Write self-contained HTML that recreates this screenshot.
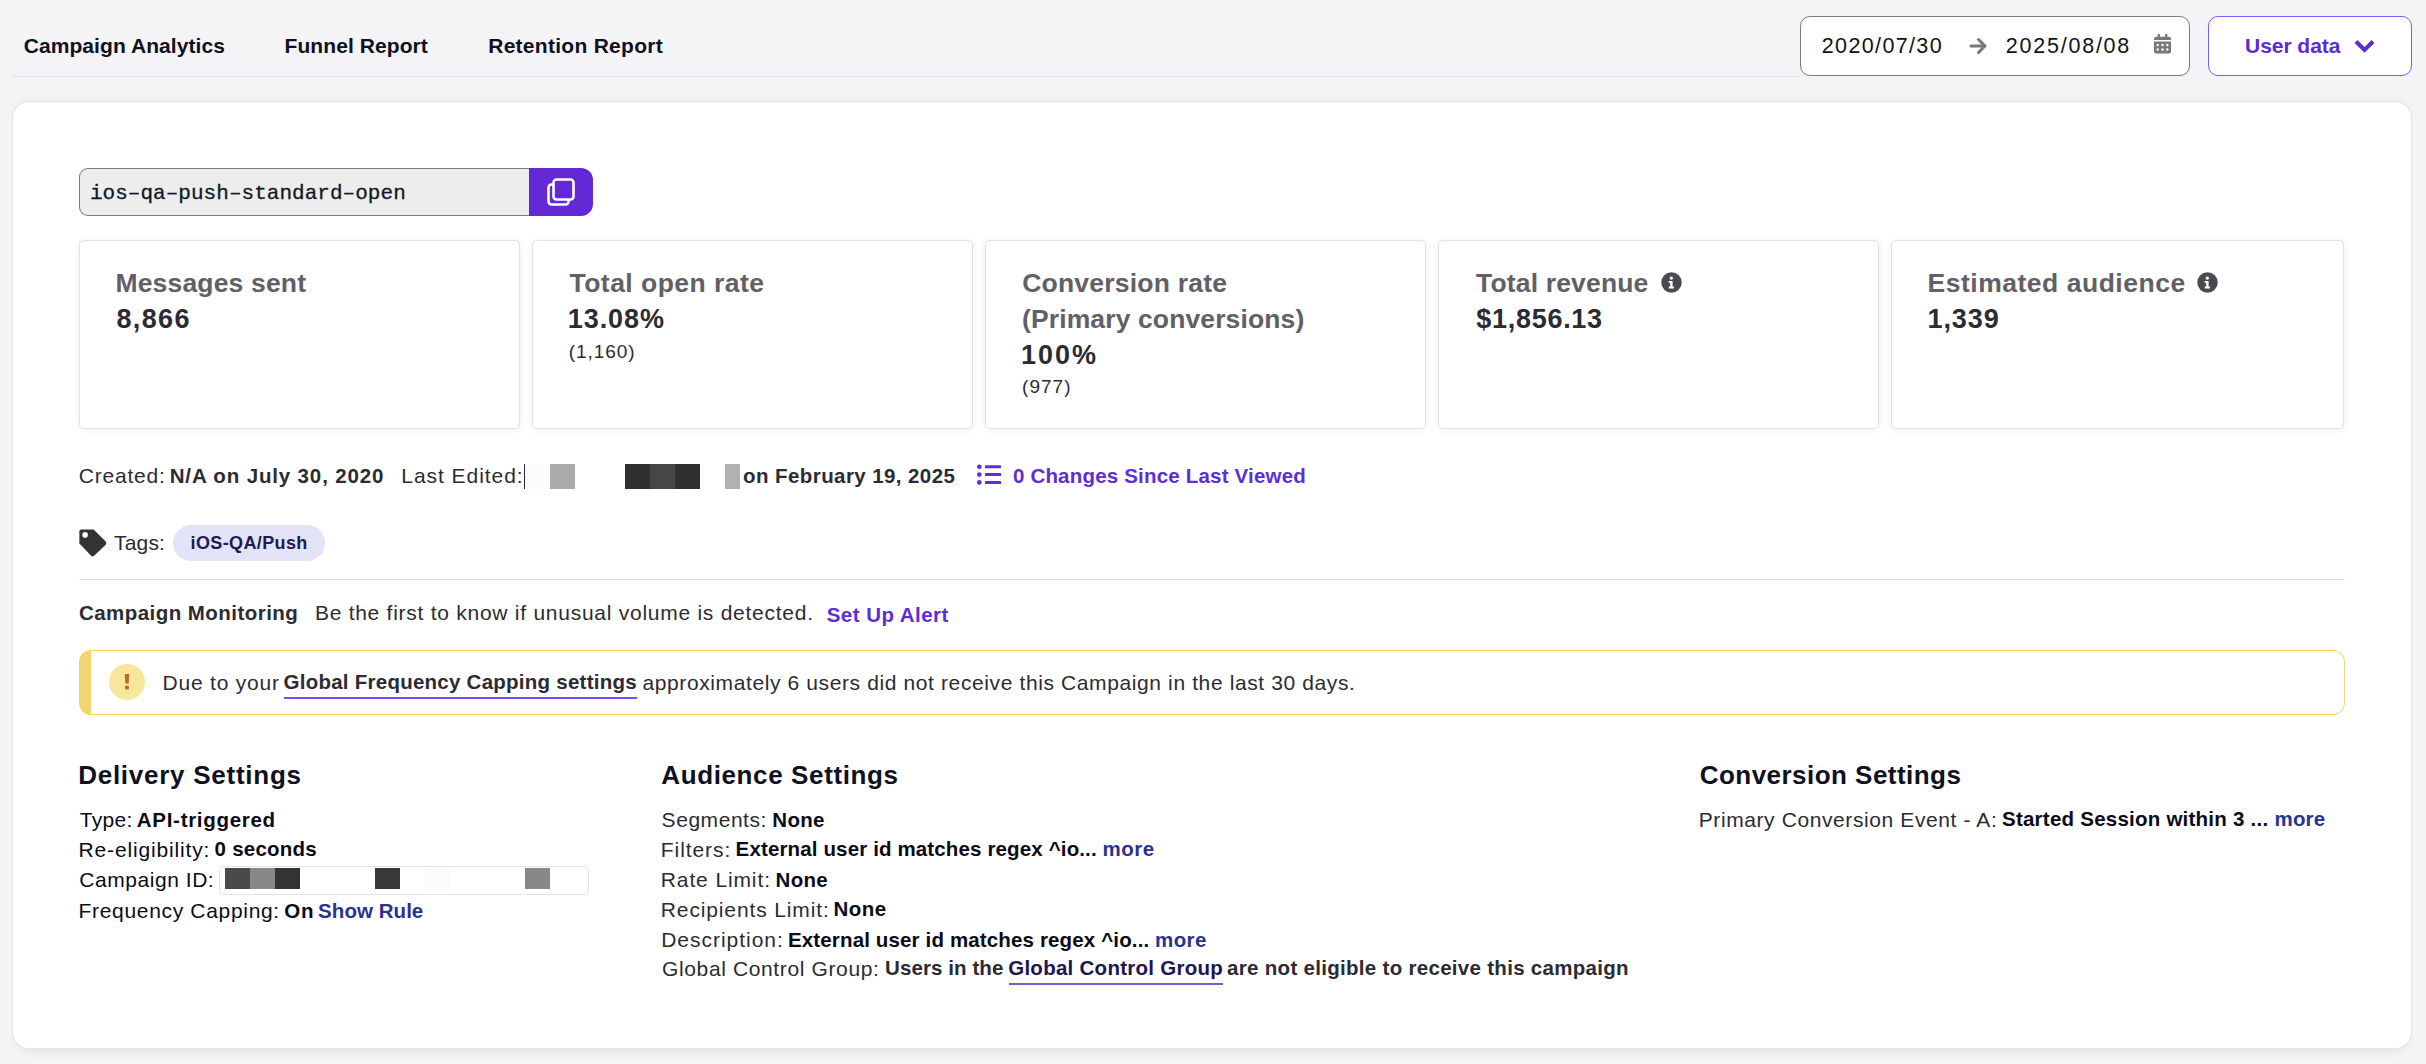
<!DOCTYPE html>
<html><head><meta charset="utf-8"><title>Campaign Analytics</title>
<style>
html,body{margin:0;padding:0}
body{width:2426px;height:1064px;overflow:hidden;background:#f4f4f6;position:relative;font-family:"Liberation Sans",sans-serif}
.t{position:absolute;line-height:1;white-space:pre}
.a{position:absolute;box-sizing:border-box}
</style></head><body>
<!-- header divider -->
<div class=a style="left:12px;top:76px;width:1788px;height:1px;background:#e1e1e6"></div>
<!-- date picker -->
<div class=a style="left:1800px;top:16px;width:390px;height:60px;border:1px solid #7b7b80;border-radius:10px;background:#fff"></div>
<svg class=a style="left:1968px;top:36px" width="20" height="20" viewBox="0 0 20 20"><path d="M3 10H16M10.5 3.5L17 10L10.5 16.5" fill="none" stroke="#77777c" stroke-width="3" stroke-linecap="round" stroke-linejoin="round"/></svg>
<svg class=a style="left:2153px;top:33px" width="19" height="22" viewBox="0 0 19 22"><rect x="4.6" y="1" width="2.4" height="4.5" rx=".6" fill="#77777c"/><rect x="12" y="1" width="2.4" height="4.5" rx=".6" fill="#77777c"/><path d="M1 5.8Q1 3.8 3 3.8H16Q18 3.8 18 5.8V7H1Z" fill="#77777c"/><path d="M1 8.4H18V18.6Q18 20.6 16 20.6H3Q1 20.6 1 18.6Z" fill="#77777c"/><g fill="#fff"><circle cx="4.6" cy="11.9" r="1.25"/><circle cx="9.5" cy="11.9" r="1.25"/><circle cx="14.3" cy="11.9" r="1.25"/><circle cx="4.6" cy="16.6" r="1.25"/><circle cx="9.5" cy="16.6" r="1.25"/><circle cx="14.3" cy="16.6" r="1.25"/></g></svg>
<!-- user data -->
<div class=a style="left:2208px;top:16px;width:204px;height:60px;border:1px solid #7d5cf6;border-radius:10px;background:#fff"></div>
<svg class=a style="left:2352px;top:37px" width="25" height="18" viewBox="0 0 25 18"><path d="M4 4.5L12.5 13L21 4.5" fill="none" stroke="#5a2bd6" stroke-width="4"/></svg>
<!-- main card -->
<div class=a style="left:13px;top:102px;width:2398px;height:946px;background:#fff;border-radius:16px;box-shadow:0 0 0 1px #e4e4e8,0 -6px 8px -5px rgba(30,30,60,.05),0 9px 10px -5px rgba(30,30,60,.08)"></div>
<!-- campaign name -->
<div class=a style="left:79px;top:168px;width:451px;height:48px;background:#ededed;border:1px solid #7b7b80;border-right:none;border-radius:9px 0 0 9px"></div>
<div class=a style="left:529px;top:168px;width:64px;height:48px;background:#6329d6;border-radius:0 12px 12px 0"></div>
<svg class=a style="left:545px;top:175px" width="34" height="34" viewBox="0 0 34 34"><rect x="3.5" y="9.5" width="20" height="20" rx="3" fill="none" stroke="#fff" stroke-width="2.6"/><rect x="8.5" y="4.5" width="20" height="20" rx="3" fill="#6329d6" stroke="#fff" stroke-width="2.6"/></svg>
<!-- stat cards -->
<div class=a style="left:79px;top:240px;width:441px;height:189px;border:1px solid #e2e2e4;border-radius:5px;background:#fff;box-shadow:0 1px 7px rgba(0,0,0,.07)"></div>
<div class=a style="left:532px;top:240px;width:441px;height:189px;border:1px solid #e2e2e4;border-radius:5px;background:#fff;box-shadow:0 1px 7px rgba(0,0,0,.07)"></div>
<div class=a style="left:985px;top:240px;width:441px;height:189px;border:1px solid #e2e2e4;border-radius:5px;background:#fff;box-shadow:0 1px 7px rgba(0,0,0,.07)"></div>
<div class=a style="left:1438px;top:240px;width:441px;height:189px;border:1px solid #e2e2e4;border-radius:5px;background:#fff;box-shadow:0 1px 7px rgba(0,0,0,.07)"></div>
<div class=a style="left:1891px;top:240px;width:453px;height:189px;border:1px solid #e2e2e4;border-radius:5px;background:#fff;box-shadow:0 1px 7px rgba(0,0,0,.07)"></div>
<svg class=a style="left:1661px;top:272px" width="21" height="21" viewBox="0 0 21 21"><circle cx="10.5" cy="10.5" r="10.2" fill="#4a4950"/><circle cx="10.3" cy="6.1" r="1.7" fill="#fff"/><path d="M7.6 9H11.6V14.6H12.9V16.4H7.8V14.6H9.2V10.8H7.6Z" fill="#fff"/></svg>
<svg class=a style="left:2197px;top:272px" width="21" height="21" viewBox="0 0 21 21"><circle cx="10.5" cy="10.5" r="10.2" fill="#4a4950"/><circle cx="10.3" cy="6.1" r="1.7" fill="#fff"/><path d="M7.6 9H11.6V14.6H12.9V16.4H7.8V14.6H9.2V10.8H7.6Z" fill="#fff"/></svg>
<!-- last edited pixel blocks -->
<div class=a style="left:524px;top:464px;width:1px;height:25px;background:#2c2b33"></div>
<div class=a style="left:525px;top:464px;width:25px;height:25px;background:#fbfbfb"></div>
<div class=a style="left:550px;top:464px;width:25px;height:25px;background:#aaaaaa"></div>
<div class=a style="left:625px;top:464px;width:25px;height:25px;background:#303033"></div>
<div class=a style="left:650px;top:464px;width:25px;height:25px;background:#464649"></div>
<div class=a style="left:675px;top:464px;width:25px;height:25px;background:#303033"></div>
<div class=a style="left:725px;top:464px;width:15px;height:25px;background:#b1b1b1"></div>
<!-- list icon -->
<svg class=a style="left:975px;top:463px" width="28" height="24" viewBox="0 0 28 24"><g fill="#5b2ed8"><circle cx="4.3" cy="3.7" r="2.3"/><circle cx="4.3" cy="11.6" r="2.3"/><circle cx="4.3" cy="19.4" r="2.3"/><rect x="10" y="2.2" width="16" height="3" rx=".5"/><rect x="10" y="10.1" width="16" height="3" rx=".5"/><rect x="10" y="17.9" width="16" height="3" rx=".5"/></g></svg>
<!-- tag icon -->
<svg class=a style="left:78px;top:528px" width="30" height="30" viewBox="0 0 30 30"><path d="M1.4 3.2Q1.4 1.4 3.2 1.4H15.6L27.7 13.6Q29.1 15.2 27.7 16.8L16.1 27.8Q14.6 29.2 13.1 27.8L1.4 15.6Z" fill="#333336"/><circle cx="7.1" cy="6.9" r="2.8" fill="#fff"/></svg>
<div class=a style="left:173px;top:525px;width:152px;height:36px;border-radius:18px;background:#e3e3f8"></div>
<!-- divider -->
<div class=a style="left:79px;top:579px;width:2266px;height:1px;background:#dedee3"></div>
<!-- alert -->
<div class=a style="left:79px;top:650px;width:2266px;height:65px;border:1px solid #f2d572;border-left:12px solid #f2d572;border-radius:12px;background:#fff"></div>
<div class=a style="left:109px;top:664px;width:36px;height:36px;border-radius:50%;background:#f7e79b"></div>
<svg class=a style="left:123px;top:673px" width="8" height="18" viewBox="0 0 8 18"><path d="M1.8 1H6.2L5.7 10.6H2.3Z" fill="#bb6a2b"/><rect x="2" y="12.6" width="4" height="4" rx="1.6" fill="#bb6a2b"/></svg>

<div class=a style="left:284px;top:697px;width:353px;height:2px;background:#7b4cf5"></div>
<!-- campaign id box -->
<div class=a style="left:219px;top:866px;width:370px;height:29px;border:1px solid #e2e2ea;border-radius:5px;background:#fff"></div>
<div class=a style="left:225px;top:868px;width:25px;height:21px;background:#4a4a4d"></div>
<div class=a style="left:250px;top:868px;width:25px;height:21px;background:#888888"></div>
<div class=a style="left:275px;top:868px;width:25px;height:21px;background:#333336"></div>
<div class=a style="left:375px;top:868px;width:25px;height:21px;background:#38383b"></div>
<div class=a style="left:425px;top:868px;width:25px;height:21px;background:#fbfbfb"></div>
<div class=a style="left:525px;top:868px;width:25px;height:21px;background:#888888"></div>
<!-- global control group underline -->
<div class=a style="left:1008.5px;top:983px;width:214.5px;height:2px;background:#6b63c8"></div>

<div class=t style="left:23.7px;top:35.32px;font-family:'Liberation Sans',sans-serif;font-weight:700;font-size:21px;letter-spacing:0.076px;color:#0f1020">Campaign Analytics</div>
<div class=t style="left:284.5px;top:35.32px;font-family:'Liberation Sans',sans-serif;font-weight:700;font-size:21px;letter-spacing:0.083px;color:#0f1020">Funnel Report</div>
<div class=t style="left:488.2px;top:35.32px;font-family:'Liberation Sans',sans-serif;font-weight:700;font-size:21px;letter-spacing:0.28px;color:#0f1020">Retention Report</div>
<div class=t style="left:1821.8px;top:35.9px;font-family:'Liberation Sans',sans-serif;font-weight:400;font-size:21.5px;letter-spacing:1.356px;color:#111114">2020/07/30</div>
<div class=t style="left:2005.8px;top:35.9px;font-family:'Liberation Sans',sans-serif;font-weight:400;font-size:21.5px;letter-spacing:1.767px;color:#111114">2025/08/08</div>
<div class=t style="left:2245.0px;top:35.22px;font-family:'Liberation Sans',sans-serif;font-weight:700;font-size:21px;letter-spacing:-0.038px;color:#5a2bd6">User data</div>
<div class=t style="left:89.9px;top:183.01px;font-family:'Liberation Mono',monospace;font-weight:400;font-size:21px;letter-spacing:0.033px;color:#0f1a26;-webkit-text-stroke:0.3px #0f1a26">ios–qa–push–standard–open</div>
<div class=t style="left:115.4px;top:270.16px;font-family:'Liberation Sans',sans-serif;font-weight:700;font-size:26.5px;letter-spacing:0.175px;color:#616067">Messages sent</div>
<div class=t style="left:116.4px;top:306.14px;font-family:'Liberation Sans',sans-serif;font-weight:700;font-size:27px;letter-spacing:1.4px;color:#2c2b33">8,866</div>
<div class=t style="left:569.5px;top:269.56px;font-family:'Liberation Sans',sans-serif;font-weight:700;font-size:26.5px;letter-spacing:0.471px;color:#616067">Total open rate</div>
<div class=t style="left:567.8px;top:306.14px;font-family:'Liberation Sans',sans-serif;font-weight:700;font-size:27px;letter-spacing:0.92px;color:#2c2b33">13.08%</div>
<div class=t style="left:568.8px;top:341.61px;font-family:'Liberation Sans',sans-serif;font-weight:400;font-size:19px;letter-spacing:0.933px;color:#2c2b33">(1,160)</div>
<div class=t style="left:1022.2px;top:269.56px;font-family:'Liberation Sans',sans-serif;font-weight:700;font-size:26.5px;letter-spacing:0.214px;color:#616067">Conversion rate</div>
<div class=t style="left:1022.0px;top:305.76px;font-family:'Liberation Sans',sans-serif;font-weight:700;font-size:26.5px;letter-spacing:0.12px;color:#616067">(Primary conversions)</div>
<div class=t style="left:1021.0px;top:342.14px;font-family:'Liberation Sans',sans-serif;font-weight:700;font-size:27px;letter-spacing:1.967px;color:#2c2b33">100%</div>
<div class=t style="left:1022.0px;top:377.41px;font-family:'Liberation Sans',sans-serif;font-weight:400;font-size:19px;letter-spacing:1.05px;color:#2c2b33">(977)</div>
<div class=t style="left:1476.0px;top:270.26px;font-family:'Liberation Sans',sans-serif;font-weight:700;font-size:26.5px;letter-spacing:0.167px;color:#616067">Total revenue</div>
<div class=t style="left:1476.3px;top:306.14px;font-family:'Liberation Sans',sans-serif;font-weight:700;font-size:27px;letter-spacing:0.713px;color:#2c2b33">$1,856.13</div>
<div class=t style="left:1927.5px;top:269.56px;font-family:'Liberation Sans',sans-serif;font-weight:700;font-size:26.5px;letter-spacing:0.518px;color:#616067">Estimated audience</div>
<div class=t style="left:1927.5px;top:306.14px;font-family:'Liberation Sans',sans-serif;font-weight:700;font-size:27px;letter-spacing:0.925px;color:#2c2b33">1,339</div>
<div class=t style="left:78.8px;top:465.32px;font-family:'Liberation Sans',sans-serif;font-weight:400;font-size:21px;letter-spacing:0.771px;color:#2c2b33">Created:</div>
<div class=t style="left:169.7px;top:465.74px;font-family:'Liberation Sans',sans-serif;font-weight:700;font-size:20.5px;letter-spacing:0.853px;color:#2c2b33">N/A on July 30, 2020</div>
<div class=t style="left:401.3px;top:465.32px;font-family:'Liberation Sans',sans-serif;font-weight:400;font-size:21px;letter-spacing:0.955px;color:#2c2b33">Last Edited:</div>
<div class=t style="left:743.1px;top:465.74px;font-family:'Liberation Sans',sans-serif;font-weight:700;font-size:20.5px;letter-spacing:0.411px;color:#2c2b33">on February 19, 2025</div>
<div class=t style="left:1012.9px;top:465.54px;font-family:'Liberation Sans',sans-serif;font-weight:700;font-size:20.5px;letter-spacing:0.196px;color:#5b2ed8">0 Changes Since Last Viewed</div>
<div class=t style="left:114.0px;top:532.22px;font-family:'Liberation Sans',sans-serif;font-weight:400;font-size:21px;letter-spacing:0.175px;color:#2c2b33">Tags:</div>
<div class=t style="left:190.6px;top:533.56px;font-family:'Liberation Sans',sans-serif;font-weight:700;font-size:18px;letter-spacing:0.37px;color:#1e1a55">iOS-QA/Push</div>
<div class=t style="left:78.9px;top:602.74px;font-family:'Liberation Sans',sans-serif;font-weight:700;font-size:20.5px;letter-spacing:0.461px;color:#2c2b33">Campaign Monitoring</div>
<div class=t style="left:314.9px;top:602.22px;font-family:'Liberation Sans',sans-serif;font-weight:400;font-size:21px;letter-spacing:0.74px;color:#2c2b33">Be the first to know if unusual volume is detected.</div>
<div class=t style="left:826.7px;top:604.84px;font-family:'Liberation Sans',sans-serif;font-weight:700;font-size:20.5px;letter-spacing:0.464px;color:#5b2ed8">Set Up Alert</div>
<div class=t style="left:162.5px;top:672.02px;font-family:'Liberation Sans',sans-serif;font-weight:400;font-size:21px;letter-spacing:0.79px;color:#2c2b33">Due to your</div>
<div class=t style="left:283.5px;top:672.44px;font-family:'Liberation Sans',sans-serif;font-weight:700;font-size:20.5px;letter-spacing:0.25px;color:#2c2b33">Global Frequency Capping settings</div>
<div class=t style="left:642.4px;top:672.02px;font-family:'Liberation Sans',sans-serif;font-weight:400;font-size:21px;letter-spacing:0.615px;color:#2c2b33">approximately 6 users did not receive this Campaign in the last 30 days.</div>
<div class=t style="left:78.2px;top:761.79px;font-family:'Liberation Sans',sans-serif;font-weight:700;font-size:26px;letter-spacing:0.738px;color:#0f1020">Delivery Settings</div>
<div class=t style="left:661.3px;top:761.99px;font-family:'Liberation Sans',sans-serif;font-weight:700;font-size:26px;letter-spacing:0.619px;color:#0f1020">Audience Settings</div>
<div class=t style="left:1699.7px;top:761.89px;font-family:'Liberation Sans',sans-serif;font-weight:700;font-size:26px;letter-spacing:0.467px;color:#0f1020">Conversion Settings</div>
<div class=t style="left:79.8px;top:809.12px;font-family:'Liberation Sans',sans-serif;font-weight:400;font-size:21px;letter-spacing:0.325px;color:#0b0b18">Type:</div>
<div class=t style="left:136.8px;top:809.54px;font-family:'Liberation Sans',sans-serif;font-weight:700;font-size:20.5px;letter-spacing:0.708px;color:#0b0b18">API-triggered</div>
<div class=t style="left:78.5px;top:839.02px;font-family:'Liberation Sans',sans-serif;font-weight:400;font-size:21px;letter-spacing:0.85px;color:#0b0b18">Re-eligibility:</div>
<div class=t style="left:214.6px;top:839.44px;font-family:'Liberation Sans',sans-serif;font-weight:700;font-size:20.5px;letter-spacing:0.238px;color:#0b0b18">0 seconds</div>
<div class=t style="left:79.3px;top:869.22px;font-family:'Liberation Sans',sans-serif;font-weight:400;font-size:21px;letter-spacing:0.545px;color:#0b0b18">Campaign ID:</div>
<div class=t style="left:78.5px;top:900.22px;font-family:'Liberation Sans',sans-serif;font-weight:400;font-size:21px;letter-spacing:0.682px;color:#0b0b18">Frequency Capping:</div>
<div class=t style="left:284.3px;top:900.64px;font-family:'Liberation Sans',sans-serif;font-weight:700;font-size:20.5px;letter-spacing:0.8px;color:#0b0b18">On</div>
<div class=t style="left:318.1px;top:900.64px;font-family:'Liberation Sans',sans-serif;font-weight:700;font-size:20.5px;letter-spacing:0.05px;color:#2a3290">Show Rule</div>
<div class=t style="left:661.6px;top:809.12px;font-family:'Liberation Sans',sans-serif;font-weight:400;font-size:21px;letter-spacing:0.55px;color:#2c2b33">Segments:</div>
<div class=t style="left:772.3px;top:809.54px;font-family:'Liberation Sans',sans-serif;font-weight:700;font-size:20.5px;letter-spacing:0.3px;color:#0b0b18">None</div>
<div class=t style="left:660.8px;top:839.02px;font-family:'Liberation Sans',sans-serif;font-weight:400;font-size:21px;letter-spacing:0.929px;color:#2c2b33">Filters:</div>
<div class=t style="left:735.6px;top:839.44px;font-family:'Liberation Sans',sans-serif;font-weight:700;font-size:20.5px;letter-spacing:0.139px;color:#0b0b18">External user id matches regex ^io...</div>
<div class=t style="left:1102.6px;top:839.44px;font-family:'Liberation Sans',sans-serif;font-weight:700;font-size:20.5px;letter-spacing:0.467px;color:#2a3290">more</div>
<div class=t style="left:660.8px;top:869.22px;font-family:'Liberation Sans',sans-serif;font-weight:400;font-size:21px;letter-spacing:0.88px;color:#2c2b33">Rate Limit:</div>
<div class=t style="left:775.6px;top:869.64px;font-family:'Liberation Sans',sans-serif;font-weight:700;font-size:20.5px;letter-spacing:0.3px;color:#0b0b18">None</div>
<div class=t style="left:660.8px;top:898.92px;font-family:'Liberation Sans',sans-serif;font-weight:400;font-size:21px;letter-spacing:0.869px;color:#2c2b33">Recipients Limit:</div>
<div class=t style="left:833.6px;top:899.34px;font-family:'Liberation Sans',sans-serif;font-weight:700;font-size:20.5px;letter-spacing:0.467px;color:#0b0b18">None</div>
<div class=t style="left:661.2px;top:929.22px;font-family:'Liberation Sans',sans-serif;font-weight:400;font-size:21px;letter-spacing:0.973px;color:#2c2b33">Description:</div>
<div class=t style="left:788.0px;top:929.64px;font-family:'Liberation Sans',sans-serif;font-weight:700;font-size:20.5px;letter-spacing:0.142px;color:#0b0b18">External user id matches regex ^io...</div>
<div class=t style="left:1155.1px;top:929.64px;font-family:'Liberation Sans',sans-serif;font-weight:700;font-size:20.5px;letter-spacing:0.367px;color:#2a3290">more</div>
<div class=t style="left:662.0px;top:957.72px;font-family:'Liberation Sans',sans-serif;font-weight:400;font-size:21px;letter-spacing:0.63px;color:#2c2b33">Global Control Group:</div>
<div class=t style="left:885.0px;top:958.14px;font-family:'Liberation Sans',sans-serif;font-weight:700;font-size:20.5px;letter-spacing:0.091px;color:#2c2b33">Users in the</div>
<div class=t style="left:1008.2px;top:958.14px;font-family:'Liberation Sans',sans-serif;font-weight:700;font-size:20.5px;letter-spacing:0.268px;color:#1c1650">Global Control Group</div>
<div class=t style="left:1227.1px;top:958.14px;font-family:'Liberation Sans',sans-serif;font-weight:700;font-size:20.5px;letter-spacing:0.298px;color:#2c2b33">are not eligible to receive this campaign</div>
<div class=t style="left:1698.7px;top:809.02px;font-family:'Liberation Sans',sans-serif;font-weight:400;font-size:21px;letter-spacing:0.6px;color:#2c2b33">Primary Conversion Event - A:</div>
<div class=t style="left:2002.0px;top:809.44px;font-family:'Liberation Sans',sans-serif;font-weight:700;font-size:20.5px;letter-spacing:0.237px;color:#0b0b18">Started Session within 3 ...</div>
<div class=t style="left:2274.5px;top:809.44px;font-family:'Liberation Sans',sans-serif;font-weight:700;font-size:20.5px;letter-spacing:0.167px;color:#2a3290">more</div>
</body></html>
